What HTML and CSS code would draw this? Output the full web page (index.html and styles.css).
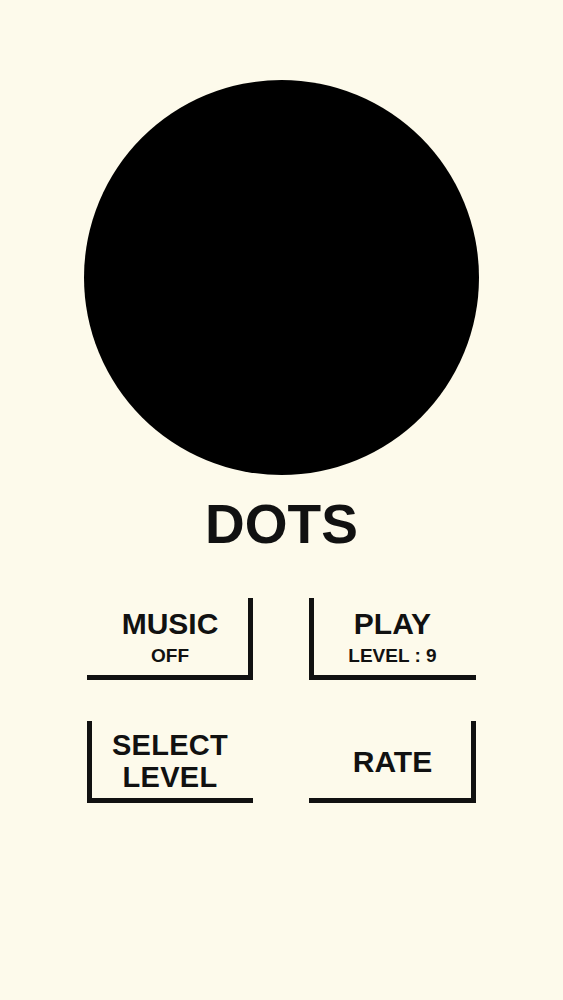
FILE: index.html
```html
<!DOCTYPE html>
<html lang="en">
<head>
<meta charset="utf-8">
<title>Dots</title>
<link rel="stylesheet" href="styles.css">
</head>
<body>
<main class="screen">
  <div class="dot"></div>
  <h1 class="title">DOTS</h1>
  <div class="menu">
    <button class="btn edge-right">
      <span class="main">MUSIC</span>
      <span class="sub">OFF</span>
    </button>
    <button class="btn edge-left">
      <span class="main">PLAY</span>
      <span class="sub">LEVEL : 9</span>
    </button>
    <button class="btn edge-left">
      <span class="main tight">SELECT<br>LEVEL</span>
    </button>
    <button class="btn edge-right">
      <span class="main">RATE</span>
    </button>
  </div>
</main>
</body>
</html>
```

FILE: styles.css
```css
html, body {
  margin: 0;
  padding: 0;
  background: #fdfaeb;
}

body {
  font-family: "Liberation Sans", Arial, sans-serif;
  color: #111;
}

.screen {
  display: flex;
  flex-direction: column;
  align-items: center;
  width: 563px;
  height: 1000px;
}

.dot {
  width: 395px;
  height: 395px;
  border-radius: 50%;
  background: #000;
  margin-top: 80px;
}

.title {
  margin: 22px 0 0;
  font-size: 55px;
  line-height: 55px;
  font-weight: 700;
}

.menu {
  margin-top: 46px;
  display: grid;
  grid-template-columns: 166px 167px;
  grid-auto-rows: 82px;
  column-gap: 56px;
  row-gap: 41px;
}

.btn {
  display: flex;
  flex-direction: column;
  align-items: center;
  justify-content: center;
  border: 0;
  margin: 0;
  padding: 3px 0 5px;
  background: transparent;
  font-family: inherit;
  color: #111;
  font-weight: 700;
  cursor: pointer;
}

.edge-right {
  box-shadow: inset -5px -5px 0 #111;
}

.edge-left {
  box-shadow: inset 5px -5px 0 #111;
}

.main {
  font-size: 30px;
  line-height: 29px;
  text-align: center;
}

.main.tight {
  font-size: 29px;
  line-height: 32px;
  letter-spacing: 0.3px;
}

.sub {
  font-size: 19px;
  line-height: 22px;
  margin-top: 7px;
}
```
